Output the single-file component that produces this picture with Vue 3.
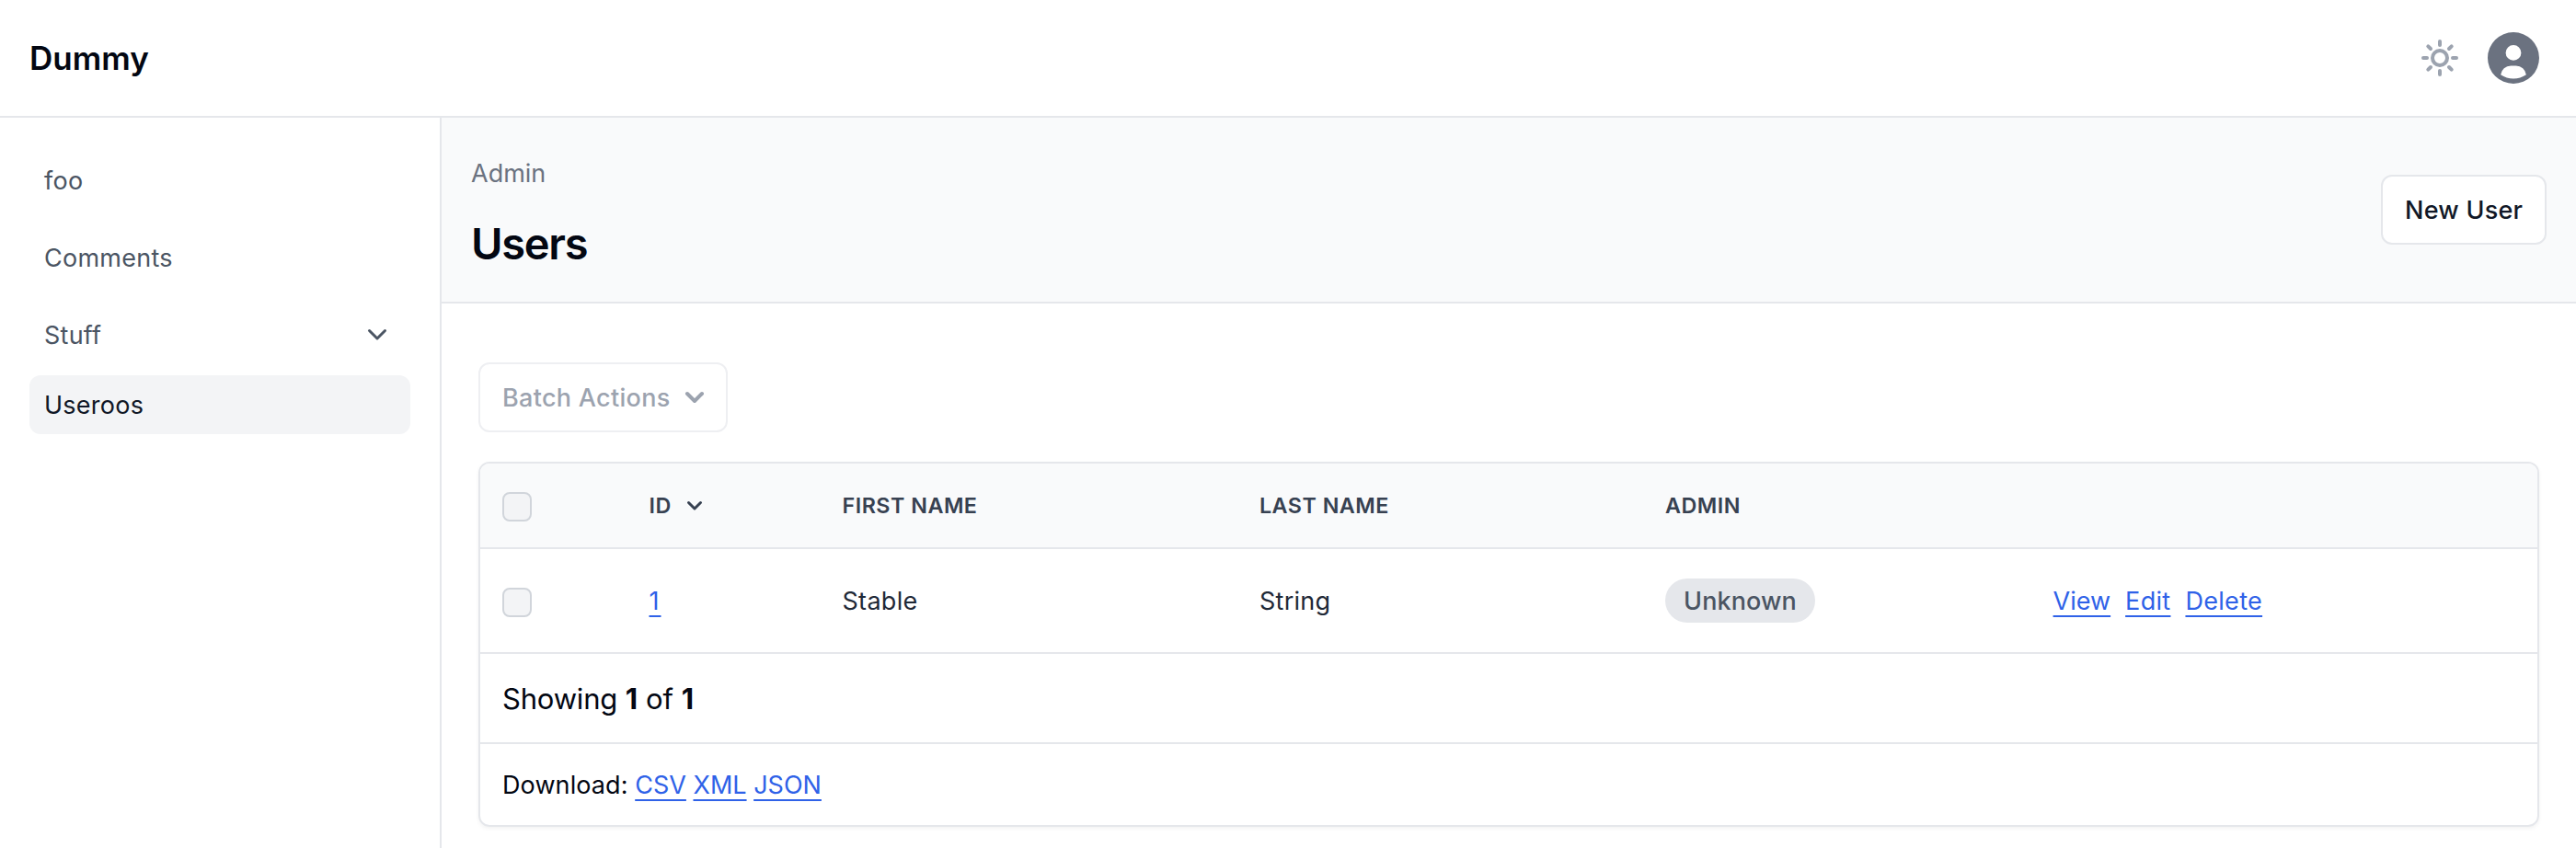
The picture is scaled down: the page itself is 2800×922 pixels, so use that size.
<script setup>
const navItems = [
  { label: 'foo' },
  { label: 'Comments' },
  { label: 'Stuff', expandable: true },
  { label: 'Useroos', active: true },
]
const users = [{ id: 1, first: 'Stable', last: 'String', admin: 'Unknown' }]
</script>

<template>
  <div class="page">
    <header class="topbar">
      <a class="brand">Dummy</a>
      <div class="tools">
        <svg class="sun" viewBox="-20 -20 40 40" fill="none" stroke="currentColor" stroke-width="4" stroke-linecap="round">
          <circle r="8" />
          <path d="M0-18v4M0 14v4M-18 0h4M14 0h4M-12.7-12.7l2.7 2.7M12.7-12.7l-2.7 2.7M-12.7 12.7l2.7-2.7M12.7 12.7l-2.7-2.7" />
        </svg>
        <svg class="avatar" viewBox="0 0 20 20" fill="currentColor">
          <path d="M10 0a10 10 0 1 0 10 10A10.011 10.011 0 0 0 10 0Zm0 5a3 3 0 1 1 0 6 3 3 0 0 1 0-6Zm0 13a8.949 8.949 0 0 1-4.951-1.488A3.987 3.987 0 0 1 9 13h2a3.987 3.987 0 0 1 3.951 3.512A8.949 8.949 0 0 1 10 18Z" />
        </svg>
      </div>
    </header>

    <div class="body">
      <nav class="sidebar">
        <a v-for="item in navItems" :key="item.label" class="nav-link" :class="{ active: item.active }">
          <span>{{ item.label }}</span>
          <svg v-if="item.expandable" class="nav-chevron" viewBox="0 0 20 12">
            <path d="M1.5 1.5 10 10l8.5-8.5" />
          </svg>
        </a>
      </nav>

      <main class="main">
        <div class="page-header">
          <div>
            <div class="crumb">Admin</div>
            <h1 class="title">Users</h1>
          </div>
          <button class="button"><span>New User</span></button>
        </div>

        <div class="content">
          <button class="button batch" disabled>
            <span>Batch Actions</span>
            <svg class="batch-chevron" viewBox="0 0 10 6">
              <path d="m1 1 4 4 4-4" />
            </svg>
          </button>

          <section class="card">
            <div class="row head">
              <div class="cell"><span class="checkbox"></span></div>
              <div class="cell">
                <span>ID</span>
                <svg class="sort-chevron" viewBox="0 0 16 10">
                  <path d="m1.5 1.5 6.5 6.5 6.5-6.5" />
                </svg>
              </div>
              <div class="cell">FIRST NAME</div>
              <div class="cell">LAST NAME</div>
              <div class="cell">ADMIN</div>
              <div class="cell"></div>
            </div>
            <div v-for="user in users" :key="user.id" class="row record">
              <div class="cell"><span class="checkbox"></span></div>
              <div class="cell text"><a class="link id">{{ user.id }}</a></div>
              <div class="cell text">{{ user.first }}</div>
              <div class="cell text">{{ user.last }}</div>
              <div class="cell"><span class="badge">{{ user.admin }}</span></div>
              <div class="cell text actions">
                <a class="link view">View</a>
                <a class="link">Edit</a>
                <a class="link">Delete</a>
              </div>
            </div>
            <div class="summary"><span class="showing">Showing</span> <b>1</b> of <b>1</b></div>
            <div class="download"><span class="label">Download:</span> <a class="link">CSV</a> <a class="link">XML</a> <a class="link">JSON</a></div>
          </section>
        </div>
      </main>
    </div>
  </div>
</template>

<style>
body {
  background: #fff;
}
</style>

<style scoped>
.page,
.page * {
  box-sizing: border-box;
}
.page {
  display: flex;
  flex-direction: column;
  height: 922px;
  overflow: hidden;
  font-family: Inter, "Liberation Sans", sans-serif;
  font-size: 27px;
  line-height: 40px;
  color: #030712;
}
svg {
  display: block;
  flex: none;
}
.topbar {
  display: flex;
  flex: none;
  align-items: center;
  justify-content: space-between;
  height: 128px;
  padding: 0 40px 0 32px;
  border-bottom: 2px solid #e5e7eb;
}
.brand {
  font-size: 35px;
  font-weight: 600;
}
.tools {
  display: flex;
  align-items: center;
  gap: 32px;
}
.sun {
  width: 40px;
  height: 40px;
  color: #9ca3af;
}
.avatar {
  width: 56px;
  height: 56px;
  color: #6b7280;
}
.body {
  display: flex;
  flex: 1;
}
.sidebar {
  flex: none;
  width: 480px;
  padding: 36px 32px;
  border-right: 2px solid #e5e7eb;
}
.nav-link {
  display: flex;
  align-items: center;
  justify-content: space-between;
  height: 64px;
  margin-bottom: 20px;
  padding: 0 26px 0 16px;
  border-radius: 12px;
  letter-spacing: 0.25px;
  color: #4b5563;
}
.nav-link span {
  padding-top: 2px;
}
.nav-link:nth-child(3) {
  margin-bottom: 12px;
}
.nav-link.active {
  background: #f3f4f6;
  color: #111827;
}
.nav-chevron,
.batch-chevron,
.sort-chevron {
  overflow: visible;
  fill: none;
  stroke: currentColor;
  stroke-linecap: round;
  stroke-linejoin: round;
}
.nav-chevron {
  width: 20px;
  height: 12px;
  stroke-width: 3;
}
.main {
  flex: 1;
  min-width: 0;
}
.page-header {
  display: flex;
  align-items: flex-start;
  justify-content: space-between;
  height: 202px;
  padding: 40px 32px 0;
  background: #f9fafb;
  border-bottom: 2px solid #e5e7eb;
}
.crumb {
  line-height: 42px;
  color: #6b7280;
}
.title {
  margin: 31px 0 0;
  font-size: 47px;
  line-height: 48px;
  font-weight: 600;
  letter-spacing: -1.3px;
}
.button {
  display: flex;
  align-items: center;
  height: 76px;
  padding: 0 24px;
  border: 2px solid #e5e7eb;
  border-radius: 12px;
  background: #fff;
  color: #111827;
  font: 500 27px/40px Inter, "Liberation Sans", sans-serif;
  letter-spacing: 0.25px;
}
.button span {
  padding-top: 2px;
}
.page-header .button {
  width: 180px;
  margin-top: 22px;
  white-space: nowrap;
}
.content {
  padding: 64px 40px;
}
.batch {
  justify-content: space-between;
  width: 271px;
  margin-bottom: 32px;
  border-color: #eeeff2;
  color: #9ca3af;
  letter-spacing: 0.3px;
}
.batch-chevron {
  width: 20px;
  height: 12px;
  stroke-width: 2;
}
.card {
  overflow: hidden;
  border: 2px solid #e5e7eb;
  border-radius: 12px;
  box-shadow: 0 2px 4px rgba(0, 0, 0, 0.05);
}
.row {
  display: grid;
  grid-template-columns: 159.5px 210px 453.4px 441.2px 421.5px 1fr;
  border-bottom: 2px solid #e5e7eb;
}
.cell {
  display: flex;
  align-items: center;
  padding: 0 24px;
}
.cell.text {
  padding-top: 2px;
}
.head {
  height: 93px;
  background: #f9fafb;
  color: #374151;
  font-size: 23.3px;
  font-weight: 600;
  letter-spacing: 0.5px;
}
.record {
  height: 114px;
  color: #1f2937;
  letter-spacing: 0.3px;
}
.sort-chevron {
  width: 16px;
  height: 10px;
  margin-left: 17px;
  stroke-width: 3;
}
.checkbox {
  width: 32px;
  height: 32px;
  margin-top: 3px;
  border: 2px solid #d1d5db;
  border-radius: 8px;
  background: #f3f4f6;
}
.link {
  color: #2f62e8;
  text-decoration: underline;
  text-decoration-thickness: 2px;
  text-underline-offset: 6px;
  text-decoration-skip-ink: none;
}
.id {
  letter-spacing: 2px;
}
.badge {
  height: 48px;
  padding: 0 20px;
  border-radius: 24px;
  background: #e5e7eb;
  color: #4b5563;
  font-weight: 500;
  line-height: 50px;
  letter-spacing: 0.1px;
}
.actions {
  gap: 16px;
}
.view {
  letter-spacing: 0;
}
.summary {
  height: 98px;
  padding: 1px 24px 0;
  border-bottom: 2px solid #e5e7eb;
  font-size: 31px;
  line-height: 96px;
}
.summary b {
  font-weight: 700;
}
.showing {
  letter-spacing: -0.2px;
}
.download {
  height: 88px;
  padding: 0 24px;
  line-height: 90px;
}
.label {
  letter-spacing: 0.1px;
}
</style>
